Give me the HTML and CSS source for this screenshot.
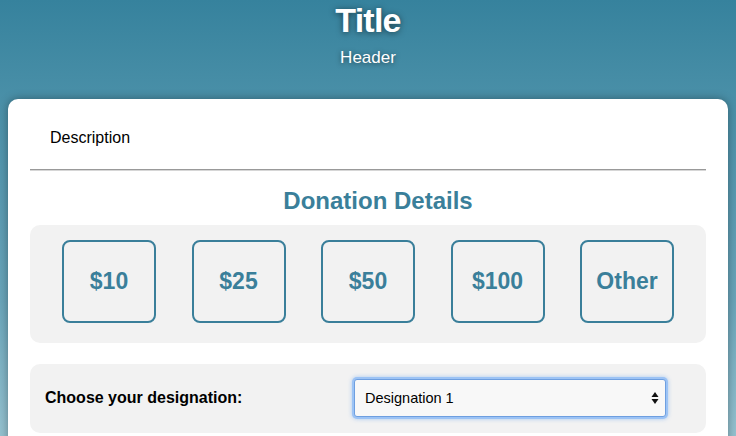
FILE: index.html
```html
<!DOCTYPE html>
<html lang="en">
<head>
<meta charset="utf-8">
<title>Donation</title>
<link rel="stylesheet" href="styles.css">
</head>
<body>
<header class="top">
  <h1 class="title">Title</h1>
  <p class="subtitle">Header</p>
</header>
<main class="card">
  <div class="description">Description</div>
  <hr class="divider">
  <h2 class="section-title">Donation Details</h2>
  <div class="panel amounts">
    <button class="amount" type="button">$10</button>
    <button class="amount" type="button">$25</button>
    <button class="amount" type="button">$50</button>
    <button class="amount" type="button">$100</button>
    <button class="amount" type="button">Other</button>
  </div>
  <div class="panel designation">
    <label class="designation-label" for="desig">Choose your designation:</label>
    <div class="select-wrap">
      <select id="desig" class="select">
        <option>Designation 1</option>
        <option>Designation 2</option>
      </select>
      <svg class="select-arrows" width="8" height="14" viewBox="0 0 8 14" aria-hidden="true">
        <path d="M4 1 L7.5 6 L0.5 6 Z" fill="#111"/>
        <path d="M4 13 L7.5 8 L0.5 8 Z" fill="#111"/>
      </svg>
    </div>
  </div>
</main>
</body>
</html>
```

FILE: styles.css
```css
html, body {
  height: 100%;
}
body {
  margin: 0;
  padding: 0 8px;
  font-family: "Liberation Sans", Arial, Helvetica, sans-serif;
  background: linear-gradient(to bottom, #36829d 0px, #4c91a9 110px, #6aa5ba 300px, #95c2d0 436px);
  background-attachment: fixed;
  overflow: hidden;
  box-sizing: border-box;
}
.top {
  text-align: center;
  color: #fff;
}
.title {
  margin: 0;
  font-size: 34px;
  line-height: 40px;
  letter-spacing: -0.8px;
  font-weight: bold;
  text-shadow: 0 1px 6px rgba(0, 0, 0, 0.55);
}
.subtitle {
  margin: 8px 0 0;
  font-size: 17px;
  line-height: 20px;
  text-shadow: 0 1px 5px rgba(0, 0, 0, 0.5);
}
.card {
  margin-top: 31px;
  background: #fff;
  border-radius: 10px;
  box-shadow: 0 0 10px rgba(0, 0, 0, 0.35);
  padding: 0 22px 20px;
}
.description {
  padding: 30px 20px 22px;
  font-size: 16px;
  line-height: 18px;
  color: #000;
}
.divider {
  margin: 0;
  border: 0;
  height: 1px;
  background: #999;
  border-bottom: 1px solid #d6d6d6;
}
.section-title {
  margin: 16px 0 10px;
  padding-left: 20px;
  text-align: center;
  font-size: 24px;
  line-height: 28px;
  font-weight: bold;
  color: #3a7f9a;
}
.panel {
  background: #f2f2f2;
  border-radius: 10px;
}
.amounts {
  display: flex;
  justify-content: space-between;
  padding: 15px 32px 20px;
}
.amount {
  width: 94px;
  height: 83px;
  box-sizing: border-box;
  border: 2px solid #3a7f9a;
  border-radius: 8px;
  background: #f2f2f2;
  color: #3a7f9a;
  font-family: "Liberation Sans", Arial, Helvetica, sans-serif;
  font-size: 23px;
  font-weight: bold;
  padding: 0;
}
.designation {
  margin-top: 21px;
  display: grid;
  grid-template-columns: 309px 312px;
  align-items: center;
  padding: 15px 0 16px 15px;
}
.designation-label {
  font-size: 16px;
  font-weight: bold;
  color: #000;
}
.select-wrap {
  position: relative;
  height: 38px;
}
.select {
  -webkit-appearance: none;
  appearance: none;
  width: 312px;
  height: 38px;
  box-sizing: border-box;
  margin: 0;
  padding: 0 24px 0 10px;
  background: #f8f8f8;
  border: 1px solid #6e9fe0;
  border-radius: 3px;
  box-shadow: 0 0 0 2px #9cc3f5, 0 0 4px 2px rgba(80, 150, 240, 0.45);
  font-family: "Liberation Sans", Arial, Helvetica, sans-serif;
  font-size: 14.5px;
  color: #000;
  outline: none;
}
.select-arrows {
  position: absolute;
  right: 7px;
  top: 12px;
  pointer-events: none;
}
```
